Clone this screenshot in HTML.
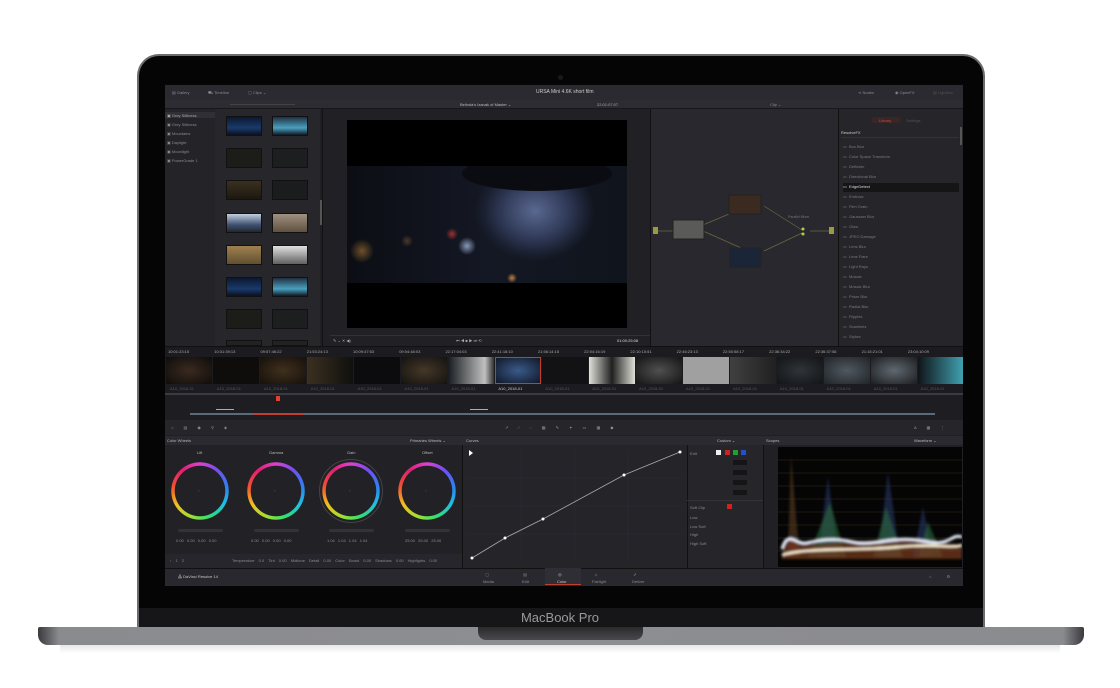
<!DOCTYPE html>
<html><head><meta charset="utf-8">
<style>
*{margin:0;padding:0;box-sizing:border-box}
body{width:1120px;height:688px;background:#fff;position:relative;overflow:hidden;font-family:"Liberation Sans",sans-serif}
.a{position:absolute}
.t{position:absolute;font-size:4px;color:#8a8a90;white-space:nowrap}
.ring{position:absolute;width:58px;height:58px;border-radius:50%;background:conic-gradient(from 0deg,#e040d0,#7050f0,#3080f0,#20c0e0,#30e070,#a0e030,#f0c020,#f05030,#e02070,#e040d0);-webkit-mask:radial-gradient(circle,transparent 25px,#000 25.5px,#000 28.5px,transparent 29px);mask:radial-gradient(circle,transparent 25px,#000 25.5px,#000 28.5px,transparent 29px)}
.th{position:absolute;width:36px;height:20px;border:1px solid #111}
.clip{position:absolute;top:357px;width:46px;height:27px}
</style></head><body>
<!-- lid -->
<div class="a" style="left:137px;top:54px;width:848px;height:576px;border-radius:22px 22px 0 0;background:#6c6c70"></div>
<div class="a" style="left:139px;top:56px;width:844px;height:572px;border-radius:20px 20px 0 0;background:#050505"></div>
<div class="a" style="left:558px;top:75px;width:5px;height:5px;border-radius:50%;background:#1a1a1c"></div>
<div class="a" style="left:139px;top:608px;width:844px;height:20px;background:#161618"></div>
<div class="t" style="left:0;width:1120px;text-align:center;top:610px;font-size:13px;color:#9a9a9e">MacBook Pro</div>
<!-- base -->
<div class="a" style="left:38px;top:627px;width:1046px;height:18px;border-radius:2px 2px 10px 10px;background:linear-gradient(90deg,#3a3a3e 0,#8a8b8f 2%,#8d8e92 50%,#8a8b8f 98%,#3a3a3e 100%)"></div>
<div class="a" style="left:478px;top:627px;width:165px;height:13px;border-radius:0 0 8px 8px;background:linear-gradient(#2a2a2c,#4a4a4e)"></div>
<div class="a" style="left:60px;top:645px;width:1000px;height:8px;background:linear-gradient(#e6e6e8,#fff)"></div>

<!-- screen -->
<div class="a" style="left:165px;top:85px;width:798px;height:501px;background:#1f1f24"></div>
<div class="a" style="left:165px;top:85px;width:798px;height:15px;background:#2a2a30"></div>
<div class="t" style="left:172px;top:90px">▤ Gallery</div>
<div class="t" style="left:208px;top:90px">⛟ Timeline</div>
<div class="t" style="left:248px;top:90px">▢ Clips ⌄</div>
<div class="t" style="left:536px;top:89px;color:#ccc;font-size:5px">URSA Mini 4.6K short film</div>
<div class="t" style="left:858px;top:90px">⋖ Nodes</div>
<div class="t" style="left:895px;top:90px">◉ OpenFX</div>
<div class="t" style="left:933px;top:90px;color:#555">▤ Lightbox</div>
<div class="a" style="left:165px;top:100px;width:798px;height:9px;background:#2c2c32;border-bottom:1px solid #18181c"></div>
<div class="a" style="left:230px;top:104px;width:65px;height:1px;background:#444"></div>
<div class="t" style="left:460px;top:102px;color:#bbb">Belinda's Izanak of Master ⌄</div>
<div class="t" style="left:597px;top:102px;color:#aaa">22:01:07:07</div>
<div class="t" style="left:770px;top:102px">Clip ⌄</div>
<!-- gallery list -->
<div class="a" style="left:165px;top:109px;width:50px;height:237px;background:#232328"></div>
<div class="a" style="left:165px;top:112px;width:50px;height:6px;background:#2f2f35"></div>
<div class="t" style="left:167px;top:113px;color:#aaa">▣ Grey Stillness</div>
<div class="t" style="left:167px;top:122px">▣ Grey Stillness</div>
<div class="t" style="left:167px;top:131px">▣ Mountains</div>
<div class="t" style="left:167px;top:140px">▣ Daylight</div>
<div class="t" style="left:167px;top:149px">▣ Moonlight</div>
<div class="t" style="left:167px;top:158px">▣ PowerGrade 1</div>
<!-- thumbs -->
<div class="a" style="left:215px;top:109px;width:105px;height:237px;background:#26262b"></div>
<div class="a" style="left:320px;top:200px;width:2px;height:25px;background:#555"></div>
<div class="th" style="left:226px;top:116px;background:linear-gradient(#0b1830,#1a3a6a 60%,#0a1020)"></div>
<div class="th" style="left:272px;top:116px;background:linear-gradient(#203040,#4aa0c0 60%,#101820)"></div>
<div class="th" style="left:226px;top:148px;background:#1c1c18"></div>
<div class="th" style="left:272px;top:148px;background:#1c1e20"></div>
<div class="th" style="left:226px;top:180px;background:linear-gradient(#3a3020,#1c1810)"></div>
<div class="th" style="left:272px;top:180px;background:#1a1c1e"></div>
<div class="th" style="left:226px;top:213px;background:linear-gradient(#c0d0e0,#405070 60%,#202830)"></div>
<div class="th" style="left:272px;top:213px;background:linear-gradient(#a09080,#605040)"></div>
<div class="th" style="left:226px;top:245px;background:linear-gradient(#a08050,#605030)"></div>
<div class="th" style="left:272px;top:245px;background:linear-gradient(#e0e0e0,#606060)"></div>
<div class="th" style="left:226px;top:277px;background:linear-gradient(#0b1830,#1a3a6a 60%,#0a1020)"></div>
<div class="th" style="left:272px;top:277px;background:linear-gradient(#203040,#4aa0c0 60%,#101820)"></div>
<div class="th" style="left:226px;top:309px;background:#1c1c18"></div>
<div class="th" style="left:272px;top:309px;background:#1c1e20"></div>
<div class="th" style="left:226px;top:340px;height:6px;background:#222"></div>
<div class="th" style="left:272px;top:340px;height:6px;background:#222"></div>
<!-- viewer -->
<div class="a" style="left:322px;top:109px;width:328px;height:237px;background:#202025;border-left:1px solid #111"></div>
<div class="a" style="left:347px;top:120px;width:280px;height:208px;background:#000"></div>
<div class="a" style="left:347px;top:166px;width:280px;height:117px;overflow:hidden;background:radial-gradient(circle 9px at 120px 80px,#8898b8,transparent),radial-gradient(circle 6px at 105px 68px,#a03030,transparent),radial-gradient(circle 12px at 15px 85px,#70502a,transparent),radial-gradient(circle 6px at 60px 75px,#4a3a2a,transparent),radial-gradient(circle 5px at 165px 112px,#c08040,transparent),linear-gradient(90deg,#0c0e14,#141824 50%,#10141c)">
<div class="a" style="left:108px;top:-5px;width:170px;height:130px;border-radius:45% 40% 20% 50%;background:radial-gradient(ellipse 60px 50px at 80px 50px,#5a6890,#303a58 55%,#1a2030 85%,transparent 100%)"></div>
<div class="a" style="left:115px;top:-10px;width:150px;height:35px;border-radius:50%;background:#0a0c12"></div>
</div>
<div class="a" style="left:330px;top:335px;width:320px;height:1px;background:#333"></div>
<div class="t" style="left:333px;top:338px;color:#aaa">✎ ⌄ ✕ ◀)</div>
<div class="t" style="left:456px;top:338px;color:#aaa">⏮ ◀ ■ ▶ ⏭ ⟲</div>
<div class="t" style="left:617px;top:338px;color:#ddd">01:00:25:08</div>
<!-- node editor -->
<div class="a" style="left:650px;top:109px;width:188px;height:237px;background:#28282e;border-left:1px solid #111"></div>
<svg class="a" style="left:650px;top:109px" width="188" height="237">
<g stroke="#6a6a40" stroke-width="0.7" fill="none"><path d="M8 122 L32 122 M53 116 L98 97 M53 122 L98 142 M114 97 L152 121 M114 142 L152 124 M160 122 L180 122"/></g>
<rect x="3" y="118" width="5" height="7" fill="#9a9a40"/><rect x="179" y="118" width="5" height="7" fill="#9a9a40"/>
<rect x="23" y="111" width="31" height="19" fill="#5a5a58" stroke="#222"/>
<rect x="79" y="86" width="32" height="19" fill="#3a2a20" stroke="#222"/>
<rect x="80" y="139" width="31" height="19" fill="#1a2638" stroke="#222"/>
<circle cx="153" cy="120" r="1.5" fill="#bc4"/><circle cx="153" cy="125" r="1.5" fill="#bc4"/>
<text x="138" y="109" font-size="3.5" fill="#777" font-family="Liberation Sans">Parallel Mixer</text>
</svg>
<!-- library -->
<div class="a" style="left:838px;top:109px;width:125px;height:237px;background:#25252a;border-left:1px solid #111"></div>
<div class="a" style="left:871px;top:117px;width:30px;height:6px;border-radius:3px;background:#3a2626"></div>
<div class="t" style="left:879px;top:118px;color:#c05040">Library</div>
<div class="t" style="left:906px;top:118px;color:#555">Settings</div>
<div class="t" style="left:841px;top:130px;color:#ccc">ResolveFX</div>
<div class="a" style="left:841px;top:137px;width:118px;height:1px;background:#333"></div>
<div class="a" style="left:843px;top:183px;width:116px;height:9px;background:#151518"></div>
<div class="a" style="left:960px;top:127px;width:2px;height:18px;background:#555"></div>
<div class="a" style="left:843px;top:142px;font-size:4px;color:#7a7a80;line-height:10px;white-space:pre">▭  Box Blur
▭  Color Space Transform
▭  Deflicker
▭  Directional Blur
<span style="color:#ddd">▭  EdgeDetect</span>
▭  Emboss
▭  Film Grain
▭  Gaussian Blur
▭  Glow
▭  JPEG Damage
▭  Lens Blur
▭  Lens Flare
▭  Light Rays
▭  Mosaic
▭  Mosaic Blur
▭  Prism Blur
▭  Radial Blur
▭  Ripples
▭  Scanlines
▭  Stylize</div>
<!-- clip strip -->
<div class="a" style="left:165px;top:346px;width:798px;height:47px;background:#1c1c20;border-top:1px solid #111"></div>
<div class="clip" style="left:166px;background:radial-gradient(#3a2a20,#0f0c0a)"></div>
<div class="clip" style="left:213px;background:#0e0d0c"></div>
<div class="clip" style="left:260px;background:radial-gradient(#40301e,#15100a)"></div>
<div class="clip" style="left:307px;background:linear-gradient(90deg,#3a3020,#10100e)"></div>
<div class="clip" style="left:354px;background:#0c0c0e"></div>
<div class="clip" style="left:401px;background:radial-gradient(#443828,#141210)"></div>
<div class="clip" style="left:448px;background:linear-gradient(90deg,#181c20,#c0c0c0 80%,#303030)"></div>
<div class="clip" style="left:495px;background:radial-gradient(#3a5a8a,#101828);border:1px solid #c04030"></div>
<div class="clip" style="left:542px;background:#121214"></div>
<div class="clip" style="left:589px;background:linear-gradient(90deg,#e0e0d8,#202020 50%,#e0e0d8)"></div>
<div class="clip" style="left:636px;background:radial-gradient(#505050,#141414)"></div>
<div class="clip" style="left:683px;background:#a0a0a0"></div>
<div class="clip" style="left:730px;background:linear-gradient(90deg,#404040,#202020)"></div>
<div class="clip" style="left:777px;background:radial-gradient(#303438,#121416)"></div>
<div class="clip" style="left:824px;background:radial-gradient(#505860,#202428)"></div>
<div class="clip" style="left:871px;background:radial-gradient(#606870,#1c1e20)"></div>
<div class="clip" style="left:918px;width:45px;background:linear-gradient(90deg,#101418,#40a0b0)"></div>
<div class="t" style="left:168px;top:349px;word-spacing:24px;color:#aaa">10:01:23:15 10:31:39:13 09:57:46:22 21:53:24:13 10:09:47:53 09:04:48:03 22:17:04:03 22:41:18:10 21:56:14:15 22:04:16:19 22:10:15:51 22:46:23:13 22:50:58:17 22:36:34:22 22:36:37:56 21:15:21:01 23:04:10:09</div>
<div class="t" style="left:170px;top:386px;word-spacing:22px;color:#55555c">A10_2018-01 A10_2018-01 A10_2018-01 A10_2018-01 A10_2018-01 A10_2018-01 A10_2018-01 <span style="color:#ccc">A10_2018-01</span> A10_2018-01 A10_2018-01 A10_2018-01 A10_2018-01 A10_2018-01 A10_2018-01 A10_2018-01 A10_2018-01 A10_2018-01</div>
<div class="a" style="left:165px;top:393px;width:798px;height:2px;background:#3a3a44"></div>
<!-- mini timeline -->
<div class="a" style="left:165px;top:395px;width:798px;height:25px;background:#1d1d22"></div>
<div class="a" style="left:190px;top:413px;width:745px;height:2px;background:#5a6a7a"></div>
<div class="a" style="left:253px;top:413px;width:50px;height:2px;background:#c04030"></div>
<div class="a" style="left:276px;top:396px;width:4px;height:5px;background:#e04030"></div>
<div class="a" style="left:216px;top:409px;width:18px;height:1px;background:#aab"></div>
<div class="a" style="left:470px;top:409px;width:18px;height:1px;background:#aab"></div>
<!-- toolbar -->
<div class="a" style="left:165px;top:420px;width:798px;height:15px;background:#25252a"></div>
<div class="t" style="left:171px;top:425px;word-spacing:9px;color:#999">⌂ ▤ ◉ ⚲ ◈</div>
<div class="t" style="left:505px;top:425px;word-spacing:9px;color:#999">↗ ⁄ ◌ ▦ ✎ ✦ ▭ ▦ ◆</div>
<div class="t" style="left:914px;top:425px;word-spacing:9px;color:#999">A ▦ ⋮</div>
<!-- panel headers -->
<div class="a" style="left:165px;top:436px;width:798px;height:9px;background:#2a2a30"></div>
<div class="t" style="left:167px;top:438px;color:#bbb">Color Wheels</div>
<div class="t" style="left:410px;top:438px;color:#bbb">Primaries Wheels ⌄</div>
<div class="t" style="left:466px;top:438px;color:#bbb">Curves</div>
<div class="t" style="left:717px;top:438px;color:#bbb">Custom ⌄</div>
<div class="t" style="left:766px;top:438px;color:#bbb">Scopes</div>
<div class="t" style="left:914px;top:438px;color:#bbb">Waveform ⌄</div>
<!-- wheels -->
<div class="a" style="left:165px;top:445px;width:297px;height:123px;background:#212126"></div>
<div class="ring" style="left:171px;top:462px"></div>
<div class="ring" style="left:247px;top:462px"></div>
<div class="ring" style="left:322px;top:462px"></div>
<div class="ring" style="left:398px;top:462px"></div>
<div class="a" style="left:319px;top:459px;width:64px;height:64px;border-radius:50%;border:1px solid #444"></div>
<div class="t" style="left:197px;top:450px;color:#bbb">Lift</div>
<div class="t" style="left:269px;top:450px;color:#bbb">Gamma</div>
<div class="t" style="left:347px;top:450px;color:#bbb">Gain</div>
<div class="t" style="left:422px;top:450px;color:#bbb">Offset</div>
<div class="t" style="left:198px;top:488px">◦</div><div class="t" style="left:274px;top:488px">◦</div><div class="t" style="left:349px;top:488px">◦</div><div class="t" style="left:425px;top:488px">◦</div>
<div class="a" style="left:178px;top:529px;width:45px;height:3px;background:#333;border-radius:2px"></div>
<div class="a" style="left:254px;top:529px;width:45px;height:3px;background:#333;border-radius:2px"></div>
<div class="a" style="left:329px;top:529px;width:45px;height:3px;background:#333;border-radius:2px"></div>
<div class="a" style="left:405px;top:529px;width:45px;height:3px;background:#333;border-radius:2px"></div>
<div class="t" style="left:176px;top:538px;word-spacing:2px">0.00 0.00 0.00 0.00</div>
<div class="t" style="left:251px;top:538px;word-spacing:2px">0.00 0.00 0.00 0.00</div>
<div class="t" style="left:327px;top:538px;word-spacing:2px">1.04 1.04 1.04 1.04</div>
<div class="t" style="left:405px;top:538px;word-spacing:2px">25.00 25.00 25.00</div>
<div class="a" style="left:165px;top:554px;width:297px;height:14px;background:#26262c"></div>
<div class="t" style="left:170px;top:558px;word-spacing:3px">‹ 1 2</div>
<div class="t" style="left:232px;top:558px;word-spacing:3px">Temperature 0.0  Tint 0.00  Midtone Detail 0.00  Color Boost 0.00  Shadows 0.00  Highlights 0.00</div>
<!-- curves -->
<div class="a" style="left:462px;top:445px;width:225px;height:123px;background:#242429;border-left:1px solid #111"></div>
<svg class="a" style="left:468px;top:450px" width="215" height="112">
<g stroke="#2e2e34" stroke-width="0.6"><path d="M0 28H215M0 56H215M0 84H215M53 0V112M107 0V112M160 0V112"/></g>
<polyline points="4,108 37,88 75,69 156,25 212,2" fill="none" stroke="#aaa" stroke-width="0.8"/>
<g fill="#fff"><circle cx="4" cy="108" r="1.5"/><circle cx="37" cy="88" r="1.5"/><circle cx="75" cy="69" r="1.5"/><circle cx="156" cy="25" r="1.5"/><circle cx="212" cy="2" r="1.5"/></g>
<path d="M1 0L5 3L1 6Z" fill="#fff"/>
</svg>
<!-- custom -->
<div class="a" style="left:687px;top:445px;width:76px;height:123px;background:#25252a;border-left:1px solid #111"></div>
<div class="t" style="left:690px;top:451px">Edit</div>
<div class="a" style="left:716px;top:450px;width:5px;height:5px;background:#eee"></div>
<div class="a" style="left:725px;top:450px;width:5px;height:5px;background:#d02020"></div>
<div class="a" style="left:733px;top:450px;width:5px;height:5px;background:#20a030"></div>
<div class="a" style="left:741px;top:450px;width:5px;height:5px;background:#2050d0"></div>
<div class="a" style="left:733px;top:460px;width:14px;height:5px;background:#151518"></div>
<div class="a" style="left:733px;top:470px;width:14px;height:5px;background:#151518"></div>
<div class="a" style="left:733px;top:480px;width:14px;height:5px;background:#151518"></div>
<div class="a" style="left:733px;top:490px;width:14px;height:5px;background:#151518"></div>
<div class="a" style="left:687px;top:500px;width:76px;height:1px;background:#333"></div>
<div class="t" style="left:690px;top:505px">Soft Clip</div>
<div class="a" style="left:727px;top:504px;width:5px;height:5px;background:#d02020"></div>
<div class="t" style="left:690px;top:514px;line-height:8.5px;white-space:pre">Low
Low Soft
High
High Soft</div>
<!-- scopes -->
<div class="a" style="left:763px;top:445px;width:200px;height:123px;background:#202025;border-left:1px solid #111"></div>
<div class="a" style="left:778px;top:447px;width:184px;height:120px;background:#050505"></div>
<svg class="a" style="left:778px;top:447px" width="184" height="120">
<defs><filter id="b"><feGaussianBlur stdDeviation="1.2"/></filter></defs>
<g stroke="#3a2a18" stroke-width="0.5"><path d="M0 13H184M0 26H184M0 39H184M0 52H184M0 65H184M0 78H184M0 91H184M0 104H184"/></g>
<g filter="url(#b)">
<path d="M10 110 L13 8 L18 70 L22 110Z" fill="#5a3a20" opacity="0.6"/>
<path d="M40 110 L50 30 L60 110Z M100 110 L110 25 L122 110Z M135 110 L145 60 L155 110Z" fill="#2a3a70" opacity="0.55"/>
<path d="M30 110 L52 55 L68 110Z M95 110 L108 60 L125 110Z M140 110 L150 75 L165 110Z" fill="#2a6a3a" opacity="0.6"/>
<path d="M4 112 L6 92 L40 98 L80 94 L120 92 L160 95 L184 98 L184 112Z" fill="#7a3a20" opacity="0.7"/>
<path d="M4 102 C10 82 18 98 28 96 S55 90 75 95 S115 88 145 94 S172 86 184 90" stroke="#e8f0ff" stroke-width="3" fill="none"/>
<path d="M4 108 C30 100 80 104 120 100 S170 102 184 98" stroke="#fff4d8" stroke-width="2.5" fill="none"/>
</g>
</svg>
<!-- page bar -->
<div class="a" style="left:165px;top:568px;width:798px;height:18px;background:#28282e;border-top:1px solid #111"></div>
<div class="t" style="left:178px;top:574px;color:#ccc">⁂ DaVinci Resolve 14</div>
<div class="a" style="left:545px;top:568px;width:36px;height:17px;background:#2e2e34;border-bottom:1px solid #c04030"></div>
<div class="t" style="left:483px;top:571px;line-height:7px;white-space:pre">  ▢
Media</div>
<div class="t" style="left:522px;top:571px;line-height:7px;white-space:pre"> ▤
Edit</div>
<div class="t" style="left:557px;top:571px;line-height:7px;white-space:pre;color:#ccc"> ◎
Color</div>
<div class="t" style="left:592px;top:571px;line-height:7px;white-space:pre">  ♫
Fairlight</div>
<div class="t" style="left:632px;top:571px;line-height:7px;white-space:pre"> ⇗
Deliver</div>
<div class="t" style="left:929px;top:574px;word-spacing:14px">⌂ ⚙</div>
</body></html>
